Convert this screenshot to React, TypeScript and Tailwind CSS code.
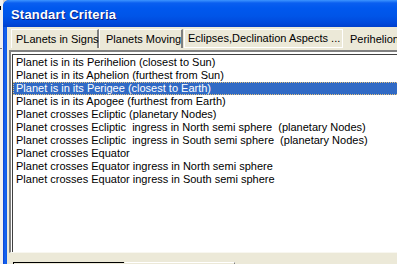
import React from "react";

const items = [
  "Planet is in its Perihelion (closest to Sun)",
  "Planet is in its Aphelion (furthest from Sun)",
  "Planet is in its Perigee (closest to Earth)",
  "Planet is in its Apogee (furthest from Earth)",
  "Planet crosses Ecliptic (planetary Nodes)",
  "Planet crosses Ecliptic  ingress in North semi sphere  (planetary Nodes)",
  "Planet crosses Ecliptic  ingress in South semi sphere  (planetary Nodes)",
  "Planet crosses Equator",
  "Planet crosses Equator ingress in North semi sphere",
  "Planet crosses Equator ingress in South semi sphere",
];

export default function App() {
  return (
    <div
      className="w-[397px] h-[264px] overflow-hidden flex bg-[#D4D0C8]"
      style={{ fontFamily: '"Liberation Sans", Arial, sans-serif' }}
    >
      {/* background window strip */}
      <div className="w-[3px] shrink-0 bg-[#F0F0F0] relative">
        <div className="absolute left-0 top-[6px] w-[1px] h-[4px] bg-black" />
        <div className="absolute left-0 top-[48px] w-[2px] h-[1px] bg-[#808080]" />
      </div>
      {/* window */}
      <div className="flex-1 flex flex-col rounded-tl-[6px] overflow-hidden bg-[#0054E3]">
        <div
          className="h-[27px] shrink-0 flex items-center pt-[3px] pl-[8px] text-white font-bold text-[13px] tracking-[0.2px] rounded-tl-[6px]"
          style={{
            background:
              "linear-gradient(to bottom, #3D95FF 0px, #0A5FF0 3px, #0058EE 8px, #0055E8 16px, #0049DC 23px, #003FCC 27px)",
            textShadow: "1px 1px 0 #0A1E80",
          }}
        >
          Standart Criteria
        </div>
        <div className="flex-1 flex">
          <div className="w-[4px] shrink-0 bg-[linear-gradient(to_right,#0A3FD0,#1666F0_50%,#0A56E8)]" />
          <div className="flex-1 flex flex-col bg-[#ECE9D8] pl-[2px]">
            {/* tabs */}
            <div className="h-[23px] shrink-0 flex items-end pl-[2px] text-[11px] text-black">
              <div className="h-[19px] w-[88px] shrink-0 flex items-center pl-[4px] border-t border-l border-white border-r-2 border-r-[#808080] mb-[2px] whitespace-nowrap">
                PLanets in Signs
              </div>
              <div className="h-[19px] w-[84px] shrink-0 flex items-center pl-[6px] border-t border-l border-white border-r-2 border-r-[#808080] mb-[2px] whitespace-nowrap">
                Planets Moving
              </div>
              <div className="h-[19px] w-[159px] shrink-0 flex items-center pl-[3px] border border-white mb-[2px] ml-[1px] whitespace-nowrap">
                Eclipses,Declination Aspects ...
              </div>
              <div className="h-[23px] flex-1 flex items-start pt-[4px] pl-[7px] whitespace-nowrap">
                Perihelion
              </div>
            </div>
            {/* list */}
            <div className="h-[203px] shrink-0 border-t-2 border-l-2 border-t-[#808080] border-l-[#808080] border-b border-b-[#F8F7F0] bg-white pt-[2px] pl-[1px]">
              <div className="border-t border-l border-[#404040] h-full pt-[1px]">
                {items.map((t, i) => (
                  <div
                    key={i}
                    className={
                      "h-[13px] leading-[13px] text-[11px] pl-[3px] whitespace-pre " +
                      (i === 2
                        ? "bg-[#316AC5] text-white outline outline-1 outline-dotted outline-[#E0C080] -outline-offset-1"
                        : "text-black")
                    }
                  >
                    {t}
                  </div>
                ))}
              </div>
            </div>
            {/* bottom */}
            <div className="flex-1 flex items-end pl-[4px]">
              <div className="h-[2px] w-[111px] border-t border-l border-black" />
              <div className="h-[2px] w-[110px] border-t border-white border-r border-r-[#808080] ml-[1px]" />
            </div>
          </div>
        </div>
      </div>
    </div>
  );
}
